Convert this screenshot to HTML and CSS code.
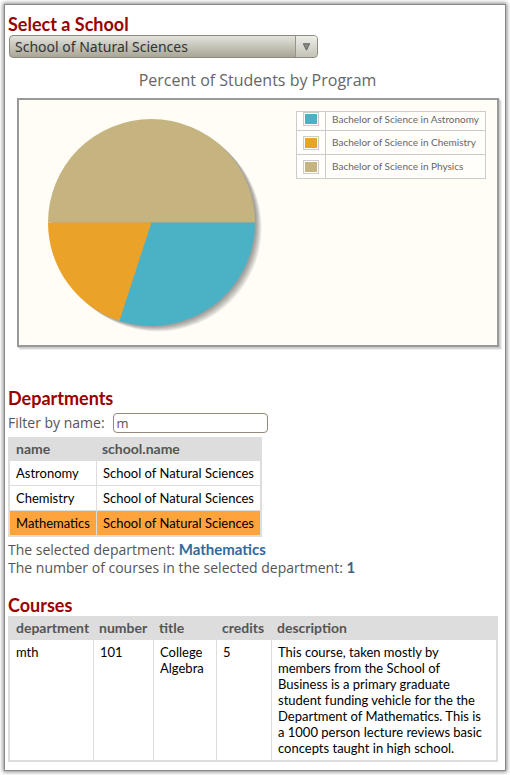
FILE: index.html
```html
<!DOCTYPE html>
<html lang="en">
<head>
<meta charset="utf-8">
<title>Select a School</title>
<link rel="stylesheet" href="styles.css">
</head>
<body>
<main class="panel">
  <section class="school">
    <h2><label for="school">Select a School</label></h2>
    <div class="picker">
      <select id="school"><option>School of Natural Sciences</option></select>
      <svg class="arrow" width="23" height="21" viewBox="0 0 23 21" aria-hidden="true"><path d="M8 7.500h7l-3.500 7z" fill="#8a8a86" stroke="#5c5c5a"/></svg>
    </div>
  </section>
  <figure class="chart">
    <figcaption>Percent of Students by Program</figcaption>
    <div class="plot">
      <svg class="pie" width="216" height="216" viewBox="0 0 216 216" role="img" aria-label="Astronomy 30%, Chemistry 20%, Physics 50%">
        <g fill="#000" fill-opacity=".07">
          <circle cx="105" cy="104.500" r="103.500"/><circle cx="106" cy="105.400" r="103.500"/><circle cx="107" cy="106.300" r="103.500"/><circle cx="108" cy="107.200" r="103.500"/><circle cx="109" cy="108.100" r="103.500"/><circle cx="110" cy="109" r="103.500"/>
        </g>
        <path d="M0 103.500a103.500 103.500 0 0 1 207 0z" fill="#c5b47f"/>
        <path d="M103.500 103.500H0a103.500 103.500 0 0 0 71.500 98.400z" fill="#eaa228"/>
        <path d="M103.500 103.500H207a103.500 103.500 0 0 1-135.500 98.400z" fill="#4bb2c5"/>
      </svg>
      <table class="legend">
        <tr><td><span class="swatch astronomy"></span></td><td>Bachelor of Science in Astronomy</td></tr>
        <tr><td><span class="swatch chemistry"></span></td><td>Bachelor of Science in Chemistry</td></tr>
        <tr><td><span class="swatch physics"></span></td><td>Bachelor of Science in Physics</td></tr>
      </table>
    </div>
  </figure>
  <section class="departments">
    <h2>Departments</h2>
    <div class="filter"><label for="filter">Filter by name:</label><input id="filter" type="text" value="m"></div>
    <table class="grid">
      <thead><tr><th>name</th><th>school.name</th></tr></thead>
      <tbody>
        <tr><td>Astronomy</td><td>School of Natural Sciences</td></tr>
        <tr><td>Chemistry</td><td>School of Natural Sciences</td></tr>
        <tr class="selected"><td>Mathematics</td><td>School of Natural Sciences</td></tr>
      </tbody>
    </table>
    <p class="summary">The selected department: <strong class="name">Mathematics</strong><br>The number of courses in the selected department: <strong>1</strong></p>
  </section>
  <section>
    <h2>Courses</h2>
    <table class="grid courses">
      <colgroup><col class="c-dept"><col class="c-num"><col class="c-title"><col class="c-cred"><col></colgroup>
      <thead><tr><th>department</th><th>number</th><th>title</th><th>credits</th><th>description</th></tr></thead>
      <tbody><tr><td>mth</td><td>101</td><td>College Algebra</td><td>5</td><td>This course, taken mostly by members from the School of Business is a primary graduate student funding vehicle for the the Department of Mathematics. This is a 1000 person lecture reviews basic concepts taught in high school.</td></tr></tbody>
    </table>
  </section>
</main>
</body>
</html>
```
FILE: styles.css
```css
* { box-sizing: border-box; }
body {
  margin: 0;
  padding: 4px;
  background: #fff;
  color: #555;
  font: 14px/18px "Trebuchet MS", "Open Sans", sans-serif;
}
.panel {
  padding: 9px 7px 8px 3px;
  border: 1px solid #888;
  box-shadow: 0 0 4px 1px #888;
}
h2 {
  margin: 0;
  color: #900;
  font: bold 18px/21px "Trebuchet MS", Lato, sans-serif;
}
.picker {
  display: grid;
  grid-template-columns: 285px 22px;
  width: 309px;
  height: 23px;
  margin-left: 1px;
  border: 1px solid #8e8b7e;
  border-radius: 4px;
  background: linear-gradient(#e3e3de, #c5c4b8 50%, #a9a697);
}
.picker select {
  grid-area: 1 / 1 / 2 / 3;
  width: 100%;
  height: 21px;
  padding: 0 24px 0 5px;
  border: 0;
  appearance: none;
  background: transparent;
  color: #333;
  font: 14px/20px "Noto Sans", sans-serif;
}
.arrow {
  grid-area: 1 / 2;
  width: 22px;
  border-left: 1px solid #96958a;
  border-radius: 0 3px 3px 0;
  background: linear-gradient(#eeeeea, #c4c2b6);
  pointer-events: none;
}
.chart { margin: 12px 0 41px 9px; }
figcaption {
  padding-bottom: 8px;
  color: #666;
  font-size: 16px;
  line-height: 20px;
  text-align: center;
}
.plot {
  display: flex;
  justify-content: space-between;
  align-items: flex-start;
  height: 249px;
  margin-right: -1px;
  padding: 11px 11px 0 29px;
  border: 2px solid #999;
  background: #fffdf6;
  box-shadow: 1px 1px 0 #ccc, 2px 2px 0 #d6d6d6, 3px 3px 0 #eee;
}
.pie { margin-top: 8px; }
.legend {
  width: 189px;
  border-collapse: collapse;
  background: #fffefb;
  color: #666;
  font: 10px/13px "Trebuchet MS", Lato, sans-serif;
  white-space: nowrap;
}
.legend td { height: 24px; padding: 0 6px; border: 1px solid #ccc; }
.legend td:first-child { width: 29px; }
.legend tr:first-child td { height: 19px; padding-bottom: 4px; }
.swatch {
  display: block;
  width: 16px;
  height: 14px;
  border: 1px solid #ccc;
  padding: 1px;
  background-clip: content-box;
}
.astronomy { background-color: #4bb2c5; }
.chemistry { background-color: #eaa228; }
.physics { background-color: #c5b47f; }
.filter { display: flex; align-items: center; gap: 8px; margin: 4px 0; height: 20px; }
.filter input {
  width: 155px;
  height: 20px;
  padding: 0 3px;
  border: 1px solid #96897a;
  border-radius: 4px;
  color: #555;
  font: 13px "Open Sans", sans-serif;
}
.grid {
  border: 2px solid #ddd;
  border-spacing: 0;
  color: #000;
  font: 13px/16px "Trebuchet MS", Lato, sans-serif;
}
.grid th {
  padding: 2px 6px 4px;
  background: #ddd;
  color: #555;
  font-size: 14px;
  text-align: left;
  vertical-align: top;
}
.grid td { padding: 4px 6px; border: 0 solid #ddd; vertical-align: top; }
.grid td + td { border-left-width: 1px; }
.grid tbody tr + tr td { border-top-width: 1px; }
.selected td { background: #ffa43d; }
.summary { margin: 4px 0 18px; }
.summary strong {
  color: #4a6079;
  font-family: "Trebuchet MS", Lato, sans-serif;
  font-size: 15px;
  line-height: 16px;
}
.summary .name { color: #306a9f; }
.courses { width: 100%; table-layout: fixed; }
.c-dept { width: 83px; }
.c-num { width: 60px; }
.c-title { width: 63px; }
.c-cred { width: 55px; }
```
